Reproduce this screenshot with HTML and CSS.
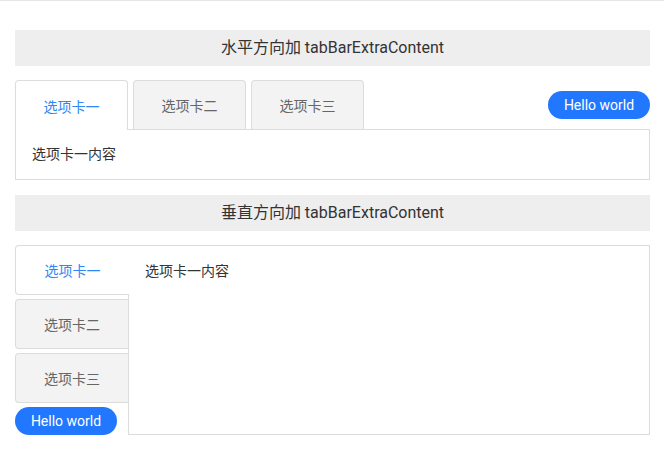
FILE: index.html
```html
<!DOCTYPE html>
<html lang="zh">
<head>
<meta charset="utf-8">
<link rel="stylesheet" href="styles.css">
</head>
<body>
<div class="wrap">
  <div class="title">水平方向加 tabBarExtraContent</div>
  <div class="h-tabs">
    <div class="h-bar">
      <div class="h-tab active">选项卡一</div>
      <div class="h-tab">选项卡二</div>
      <div class="h-tab">选项卡三</div>
      <div class="spacer"></div>
      <button class="hello">Hello world</button>
    </div>
    <div class="h-panel">选项卡一内容</div>
  </div>

  <div class="title">垂直方向加 tabBarExtraContent</div>
  <div class="v-tabs">
    <div class="v-bar">
      <div class="v-tab active">选项卡一</div>
      <div class="v-tab">选项卡二</div>
      <div class="v-tab">选项卡三</div>
      <button class="hello">Hello world</button>
    </div>
    <div class="v-panel">选项卡一内容</div>
  </div>
</div>
</body>
</html>
```
FILE: styles.css
```css
html, body {
  margin: 0;
  padding: 0;
  background: #fff;
}
body {
  border-top: 1px solid #e6e6e6;
  font-family: Roboto, "Noto Sans CJK SC", sans-serif;
  color: #333;
}
.wrap {
  padding: 29px 14px 0 15px;
}
.title {
  height: 36px;
  line-height: 36px;
  background: #eeeeee;
  text-align: center;
  font-size: 16px;
  color: #333;
  margin-bottom: 14px;
}
.h-tabs {
  margin-bottom: 15px;
}
.h-bar {
  display: flex;
  align-items: center;
  height: 49px;
  gap: 5px;
}
.h-tab {
  box-sizing: border-box;
  width: 113px;
  height: 49px;
  align-self: flex-start;
  display: flex;
  align-items: center;
  justify-content: center;
  font-size: 14px;
  color: #666;
  background: #f3f3f3;
  border: 1px solid #dcdcdc;
  border-bottom: none;
  border-radius: 4px 4px 0 0;
  position: relative;
  z-index: 1;
}
.h-tab.active {
  height: 50px;
  background: #fff;
  color: #2f86f6;
}
.spacer {
  flex: 1;
}
.hello {
  width: 102px;
  height: 28px;
  border: none;
  border-radius: 14px;
  background: #2178ff;
  color: #fff;
  font-family: Roboto, sans-serif;
  font-size: 14px;
  padding: 0;
}
.h-panel {
  box-sizing: border-box;
  height: 51px;
  border: 1px solid #dcdcdc;
  padding: 13px 16px 0;
  font-size: 14px;
  line-height: 22px;
  color: #333;
}
.v-tabs {
  display: flex;
  height: 190px;
}
.v-bar {
  width: 113px;
  display: flex;
  flex-direction: column;
  gap: 4px;
  flex-shrink: 0;
}
.v-tab {
  box-sizing: border-box;
  width: 113px;
  height: 50px;
  display: flex;
  align-items: center;
  justify-content: center;
  font-size: 14px;
  color: #666;
  background: #f3f3f3;
  border: 1px solid #dcdcdc;
  border-right: none;
  border-radius: 4px 0 0 4px;
}
.v-tab.active {
  width: 114px;
  background: #fff;
  color: #2f86f6;
  position: relative;
  z-index: 1;
}
.v-panel {
  flex: 1;
  box-sizing: border-box;
  border: 1px solid #dcdcdc;
  padding: 14px 16px 0;
  font-size: 14px;
  line-height: 22px;
  color: #333;
}
```
